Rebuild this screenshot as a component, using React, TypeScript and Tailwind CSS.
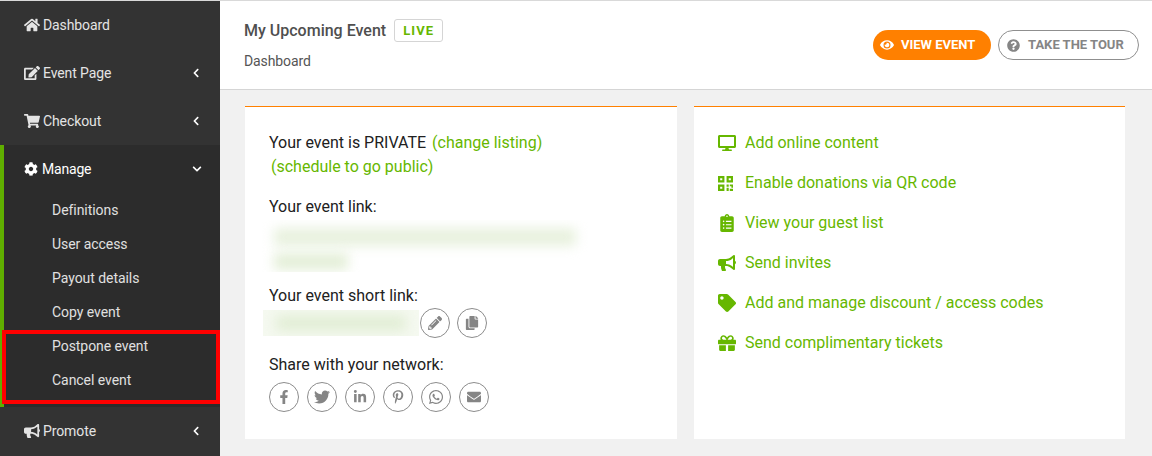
import type { ReactNode } from "react";
import {
  FaHome, FaEdit, FaShoppingCart, FaCog, FaChevronLeft, FaChevronDown, FaBullhorn, FaEye, FaQuestionCircle,
  FaPencilAlt, FaCopy, FaFacebookF, FaTwitter, FaLinkedinIn, FaPinterestP, FaWhatsapp, FaEnvelope,
  FaDesktop, FaClipboardList, FaTag, FaGift,
} from "react-icons/fa";

const subItems = ["Definitions", "User access", "Payout details", "Copy event", "Postpone event", "Cancel event"];

function QrIcon() {
  return (
    <svg width="15" height="15" viewBox="0 0 14 14" fill="currentColor">
      <path fillRule="evenodd" d="M0 0h6v6H0zM2 2v2h2V2zM8 0h6v6H8zM10 2v2h2V2zM0 8h6v6H0zM2 10v2h2v-2z" />
      <path d="M8 8h2v2H8zM11 8h3v3h-1.500V9.500H11zM8 11h2v3H8zM11 12h3v2h-3z" />
    </svg>
  );
}

const actions = [
  { icon: <FaDesktop />, label: "Add online content" },
  { icon: <QrIcon />, label: "Enable donations via QR code" },
  { icon: <FaClipboardList />, label: "View your guest list" },
  { icon: <FaBullhorn />, label: "Send invites" },
  { icon: <FaTag />, label: "Add and manage discount / access codes" },
  { icon: <FaGift />, label: "Send complimentary tickets" },
];

function NavRow({ icon, label, arrow }: { icon: ReactNode; label: string; arrow?: boolean }) {
  return (
    <div className="flex h-12 items-center pl-6 pr-[19px] text-sm text-[#e4e4e4]">
      <span className="w-[19px] text-[16px]">{icon}</span>
      <span className="flex-1 tracking-[-0.1px]">{label}</span>
      {arrow && <FaChevronLeft className="text-[10px] text-white" />}
    </div>
  );
}

function RoundIcon({ children }: { children: ReactNode }) {
  return (
    <span className="flex h-[30px] w-[30px] items-center justify-center rounded-full border border-[#8c8c8c] text-[14px] text-[#858585]">
      {children}
    </span>
  );
}

export default function App() {
  return (
    <div className="flex h-[456px] w-[1152px] overflow-hidden border-t border-[#d9d9d9] bg-[#f1f1f1] font-['Roboto',sans-serif]">
      <aside className="relative w-[220px] shrink-0 bg-[#333333]">
        <NavRow icon={<FaHome />} label="Dashboard" />
        <NavRow icon={<FaEdit />} label="Event Page" arrow />
        <NavRow icon={<FaShoppingCart />} label="Checkout" arrow />
        <div className="h-[262px] border-l-4 border-[#5fae00] bg-[#2c2c2c]">
          <div className="flex h-12 items-center pl-5 pr-[18px] text-sm text-white">
            <FaCog className="mr-1 text-[14px]" />
            <span className="flex-1 tracking-[-0.2px]">Manage</span>
            <FaChevronDown className="text-[10px]" />
          </div>
          {subItems.map((item) => (
            <div key={item} className="flex h-[34px] items-center pl-12 text-sm tracking-[-0.05px] text-[#e0e0e0]">
              {item}
            </div>
          ))}
        </div>
        <NavRow icon={<FaBullhorn />} label="Promote" arrow />
        <div className="absolute left-[2px] top-[329px] h-[74px] w-[218px] border-4 border-[#ff0000]" />
      </aside>

      <main className="min-w-0 flex-1">
        <header className="flex h-[89px] items-start justify-between border-b border-[#d5d5d5] bg-white pl-6 pr-[13px]">
          <div className="pt-[18px]">
            <div className="flex items-center">
              <span className="text-[16px] font-medium leading-[23px] text-[#4f4f4f]">My Upcoming Event</span>
              <span className="ml-2 flex h-[23px] w-[49px] items-center justify-center rounded-[3px] border border-[#d5d5d5] text-[13px] font-bold tracking-[1px] text-[#66b700]">
                LIVE
              </span>
            </div>
            <div className="mt-[9px] text-sm leading-5 tracking-[-0.1px] text-[#555555]">Dashboard</div>
          </div>
          <div className="flex gap-[7px] pt-[29px]">
            <button className="flex h-[30px] w-[118px] items-center gap-[7px] rounded-full bg-[#ff8000] pl-[7px] text-[13px] font-bold text-white">
              <FaEye className="text-[14px]" />
              VIEW EVENT
            </button>
            <button className="flex h-[30px] w-[141px] items-center gap-2 rounded-full border border-[#8f8f8f] bg-white pl-2 text-[13px] font-bold text-[#858585]">
              <FaQuestionCircle className="text-[13px]" />
              TAKE THE TOUR
            </button>
          </div>
        </header>

        <div className="flex gap-[17px] pl-[25px] pt-4">
          <section className="h-[333px] w-[432px] border-t border-[#ff8000] bg-white pl-6 pt-6 text-[16px] leading-6 text-[#212121]">
            <p>
              Your event is PRIVATE <span className="ml-0.5 text-[#66b700]">(change listing)</span>
            </p>
            <p className="pl-0.5 text-[#66b700]">(schedule to go public)</p>

            <p className="mt-4">Your event link:</p>
            <div className="-ml-[9px] mt-[1px] h-[52px] w-[330px] overflow-hidden pl-[14px] pt-2">
              <div className="h-[18px] w-[302px] bg-[#e8f1de] blur-[6px]" />
              <div className="mt-[7px] h-[17px] w-[74px] bg-[#e4efd8] blur-[6px]" />
            </div>

            <p className="mt-3">Your event short link:</p>
            <div className="flex items-center">
              <div className="-ml-[6px] flex h-[26px] w-[156px] items-center justify-center overflow-hidden bg-[#f5f9f0]">
                <div className="h-[16px] w-[130px] bg-[#e2eed6] blur-[6px]" />
              </div>
              <div className="ml-[1px] flex gap-[7px]">
                <RoundIcon><FaPencilAlt /></RoundIcon>
                <RoundIcon><FaCopy /></RoundIcon>
              </div>
            </div>

            <p className="mt-[15px]">Share with your network:</p>
            <div className="mt-[5px] flex gap-2">
              <RoundIcon><FaFacebookF /></RoundIcon>
              <RoundIcon><FaTwitter className="text-[16px]" /></RoundIcon>
              <RoundIcon><FaLinkedinIn /></RoundIcon>
              <RoundIcon><FaPinterestP /></RoundIcon>
              <RoundIcon><FaWhatsapp className="text-[16px]" /></RoundIcon>
              <RoundIcon><FaEnvelope /></RoundIcon>
            </div>
          </section>

          <section className="h-[333px] w-[431px] border-t border-[#ff8000] bg-white pl-6 pt-4 text-[16px] text-[#66b700]">
            {actions.map((a) => (
              <div key={a.label} className="flex h-10 items-center">
                <span className="w-[27px] text-[18px]">{a.icon}</span>
                <span>{a.label}</span>
              </div>
            ))}
          </section>
        </div>
      </main>
    </div>
  );
}
